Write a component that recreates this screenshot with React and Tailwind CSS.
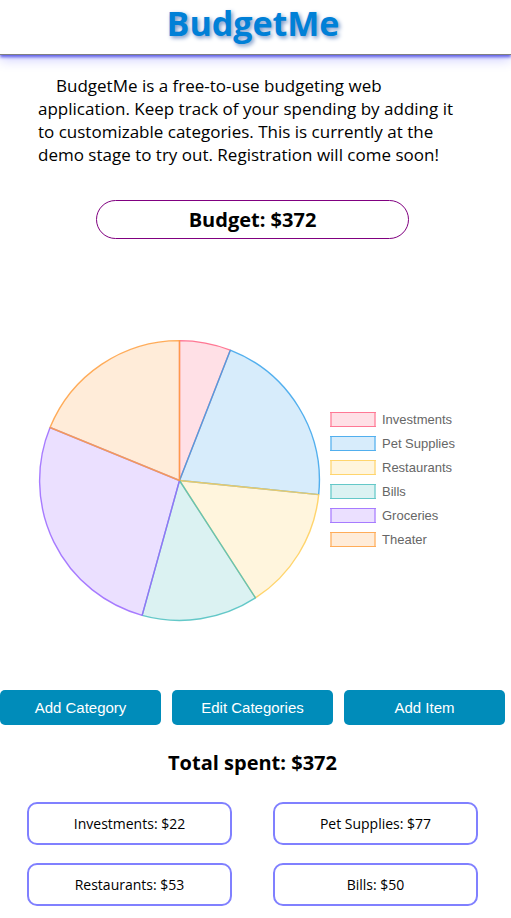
const categories = [
  { name: "Investments", spent: 22, color: "#ff6384" },
  { name: "Pet Supplies", spent: 77, color: "#36a2eb" },
  { name: "Restaurants", spent: 53, color: "#ffce56" },
  { name: "Bills", spent: 50, color: "#4bc0c0" },
  { name: "Groceries", spent: 100, color: "#9966ff" },
  { name: "Theater", spent: 70, color: "#ff9f40" },
];

const total = categories.reduce((sum, c) => sum + c.spent, 0);

const buttonClass =
  "h-[35px] rounded-[5px] bg-[#008cba] text-[15px] leading-5 text-white font-['Liberation_Sans',Arial,sans-serif]";

function Pie() {
  const center = 141.5;
  const radius = 139.9;
  let start = 0;
  const point = (angle) =>
    `${center + radius * Math.sin(angle)} ${center - radius * Math.cos(angle)}`;
  return (
    <svg viewBox="0 0 283 283" className="w-[283px] shrink-0" role="img" aria-label="Spending by category">
      {categories.map((c) => {
        const end = start + (c.spent / total) * Math.PI * 2;
        const d = `M${center} ${center}L${point(start)}A${radius} ${radius} 0 0 1 ${point(end)}Z`;
        start = end;
        return (
          <path key={c.name} d={d} fill={c.color} fillOpacity="0.2" stroke={c.color} strokeOpacity="0.85" strokeLinejoin="bevel" strokeWidth="1.4" />
        );
      })}
    </svg>
  );
}

function Legend() {
  return (
    <ul className="pb-[2px] font-['Liberation_Sans',Arial,sans-serif] text-[13px] leading-6 text-[#666]">
      {categories.map((c) => (
        <li key={c.name} className="flex items-center gap-[5px]">
          <svg viewBox="0 0 47 15" className="h-[15px] w-[47px]" aria-hidden="true">
            <rect x="0.5" y="0.5" width="45" height="14" fill={c.color} fillOpacity="0.2" />
            <path d="M0 0.5H46M0 14.5H46" stroke={c.color} strokeOpacity="0.85" />
            <path d="M1 1V14M45 1V14" stroke={c.color} strokeOpacity="0.5" strokeWidth="2" />
          </svg>
          {c.name}
        </li>
      ))}
    </ul>
  );
}

export default function App() {
  return (
    <div className="overflow-x-hidden bg-white font-['Open_Sans','Noto_Sans',sans-serif] text-black">
      <header className="border-b border-[#808080] pr-[5px] text-center shadow-[0_2px_3px_#5a5ae6,0_4px_12px_#c8c8ff]">
        <h1 className="h-[54px] text-[34px] leading-[46px] font-bold text-[#0080d7] [text-shadow:2px_2px_4px_#7896c8]">
          BudgetMe
        </h1>
      </header>
      <main className="pr-[6px]">
        <p className="mx-[38px] mt-[19px] indent-[18px] text-[17px] leading-[23px]">
          BudgetMe is a free-to-use budgeting web application. Keep track of your spending by adding it to
          customizable categories. This is currently at the demo stage to try out. Registration will come soon!
        </p>
        <h2 className="mx-24 mt-[34px] rounded-full border border-[#800080] text-center text-xl leading-[37px] font-bold">
          Budget: ${total}
        </h2>
        <section className="mt-[100px] flex items-center gap-[9px] pl-[38px]">
          <Pie />
          <Legend />
        </section>
        <div className="mt-[68px] grid grid-cols-3 gap-[11px]">
          <button type="button" className={buttonClass}>Add Category</button>
          <button type="button" className={buttonClass}>Edit Categories</button>
          <button type="button" className={buttonClass}>Add Item</button>
        </div>
        <h2 className="mt-6 text-center text-xl leading-7 font-bold">Total spent: ${total}</h2>
        <ul className="mx-[27px] mt-[25px] grid grid-cols-2 gap-x-[41px] gap-y-[18px] pb-3">
          {categories.slice(0, 4).map((c) => (
            <li key={c.name} className="rounded-[10px] border-2 border-[#8080ff] text-center text-[14px] leading-[39px]">
              {c.name}: ${c.spent}
            </li>
          ))}
        </ul>
      </main>
    </div>
  );
}
